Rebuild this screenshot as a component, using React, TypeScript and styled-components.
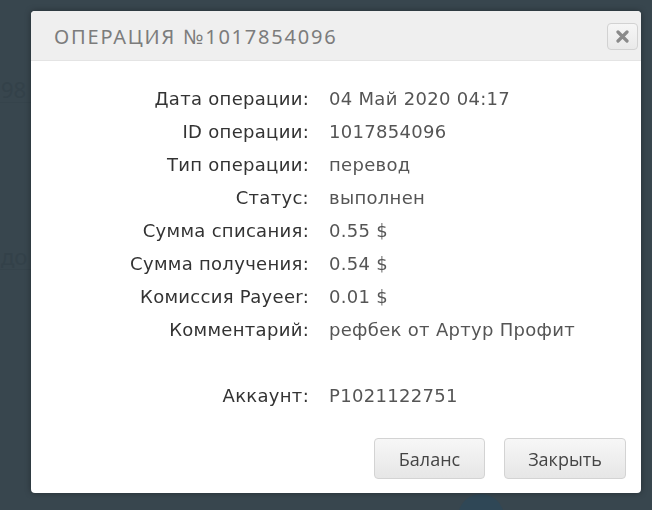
import React from "react";
import styled, { createGlobalStyle } from "styled-components";

const Global = createGlobalStyle`
  html, body { margin: 0; padding: 0; }
  body {
    background: #38464e;
    width: 652px;
    height: 510px;
    overflow: hidden;
    font-family: "DejaVu Sans", "Noto Sans", sans-serif;
  }
`;

const Page = styled.div`
  height: 510px;
  display: flex;
  flex-direction: column;
  padding-top: 76px;
  box-sizing: border-box;
  gap: 140px;
`;

const GhostText = styled.div`
  font-family: "Noto Sans", sans-serif;
  font-size: 22px;
  line-height: 26px;
  color: #334149;
  padding-left: 1px;
  border-bottom: 1px solid #35434b;
  width: 30px;
`;

const GhostCircle = styled.div`
  position: fixed;
  left: 458px;
  top: 494px;
  width: 46px;
  height: 46px;
  border-radius: 50%;
  background: #2f4756;
`;

const Overlay = styled.div`
  position: fixed;
  inset: 0;
  padding: 11px 0 0 31px;
`;

const Modal = styled.div`
  width: 610px;
  height: 482px;
  background: #ffffff;
  border-radius: 4px;
  box-shadow: 0 0 6px rgba(0, 0, 0, 0.35);
  display: flex;
  flex-direction: column;
  overflow: hidden;
`;

const Header = styled.div`
  height: 50px;
  background: #efefef;
  border-bottom: 1px solid #e4e4e4;
  display: flex;
  align-items: center;
  justify-content: space-between;
  padding: 0 3px 0 23px;
  box-sizing: border-box;
`;

const Title = styled.div`
  font-family: "Noto Sans", sans-serif;
  font-size: 20px;
  letter-spacing: 1.8px;
  color: #7c7c7c;
  padding-top: 2px;
`;

const CloseButton = styled.button`
  width: 31px;
  height: 27px;
  border: 1px solid #d2d2d2;
  border-radius: 4px;
  background: linear-gradient(#f6f6f6, #e9e9e9);
  display: flex;
  align-items: center;
  justify-content: center;
  padding: 0;
  margin-top: 2px;
`;

const Body = styled.div`
  flex: 1;
  display: flex;
  flex-direction: column;
  padding-top: 21px;
`;

const Grid = styled.div`
  display: grid;
  grid-template-columns: 278px 1fr;
  grid-auto-rows: 33px;
  column-gap: 20px;
  font-family: "DejaVu Sans", sans-serif;
  font-size: 18px;
  letter-spacing: 0.3px;
`;

const Label = styled.div`
  text-align: right;
  color: #333333;
  line-height: 33px;
  white-space: nowrap;
`;

const Value = styled.div`
  color: #555555;
  line-height: 33px;
  white-space: nowrap;
`;

const Spacer = styled.div`
  grid-column: 1 / span 2;
`;

const Footer = styled.div`
  display: flex;
  justify-content: flex-end;
  gap: 19px;
  padding: 0 15px 0 0;
  margin-top: 26px;
`;

const Button = styled.button<{ $w: number }>`
  width: ${(p) => p.$w}px;
  height: 41px;
  border: 1px solid #d3d3d3;
  border-radius: 4px;
  background: linear-gradient(#f7f7f7, #e6e6e6);
  font-family: "Open Sans", sans-serif;
  font-size: 18px;
  color: #444444;
  padding: 0;
`;

const rows: [string, string][] = [
  ["Дата операции:", "04 Май 2020 04:17"],
  ["ID операции:", "1017854096"],
  ["Тип операции:", "перевод"],
  ["Статус:", "выполнен"],
  ["Сумма списания:", "0.55 $"],
  ["Сумма получения:", "0.54 $"],
  ["Комиссия Payeer:", "0.01 $"],
  ["Комментарий:", "рефбек от Артур Профит"],
];

export default function App() {
  return (
    <>
      <Global />
      <Page>
        <GhostText>98</GhostText>
        <GhostText>до</GhostText>
      </Page>
      <GhostCircle />
      <Overlay>
        <Modal>
          <Header>
            <Title>ОПЕРАЦИЯ №1017854096</Title>
            <CloseButton aria-label="close">
              <svg width="13" height="13" viewBox="0 0 13 13">
                <path d="M2 2 L11 11 M11 2 L2 11" stroke="#8a8a8a" strokeWidth="3.2" strokeLinecap="round" />
              </svg>
            </CloseButton>
          </Header>
          <Body>
            <Grid>
              {rows.map(([l, v]) => (
                <React.Fragment key={l}>
                  <Label>{l}</Label>
                  <Value>{v}</Value>
                </React.Fragment>
              ))}
              <Spacer />
              <Label>Аккаунт:</Label>
              <Value>P1021122751</Value>
            </Grid>
            <Footer>
              <Button $w={111}>Баланс</Button>
              <Button $w={122}>Закрыть</Button>
            </Footer>
          </Body>
        </Modal>
      </Overlay>
    </>
  );
}
